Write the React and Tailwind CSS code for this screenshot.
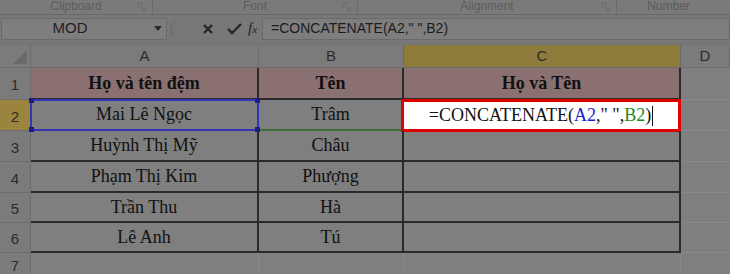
import React from "react";

const ui = { fontFamily: '"Liberation Sans", Arial, sans-serif' };
const serif = { fontFamily: '"Liberation Serif", "Times New Roman", serif' };

const people = [
  ["Mai Lê Ngọc", "Trâm", 31],
  ["Huỳnh Thị Mỹ", "Châu", 31],
  ["Phạm Thị Kim", "Phượng", 31],
  ["Trần Thu", "Hà", 30],
  ["Lê Anh", "Tú", 30],
];

function Launcher() {
  return (
    <svg width="9" height="9" viewBox="0 0 9 9" className="shrink-0">
      <path d="M1 1h5M1 1v5" stroke="#6a6a6a" strokeWidth="1" fill="none" />
      <path d="M3 3l5 5M8 5v3H5" stroke="#6a6a6a" strokeWidth="1" fill="none" />
    </svg>
  );
}

function GroupLabel({ label, width, launcher }) {
  return (
    <div
      className="relative flex h-full items-center justify-center border-r border-[#6c6c6c]"
      style={{ width }}
    >
      <span className="text-[12px] leading-none text-[#5c5c5c] -mt-[3px]">{label}</span>
      {launcher && (
        <div className="absolute right-[6px] top-[2px]">
          <Launcher />
        </div>
      )}
    </div>
  );
}

function RowHead({ n, active }) {
  return (
    <div
      className={`flex items-center justify-center border-b border-r border-[#6c6c6c] text-[15px] text-[#2b2b2b] ${
        active ? "bg-[#9b853e]" : "bg-[#7b7b7b]"
      }`}
    >
      <span className="mt-[4px]">{n}</span>
    </div>
  );
}

export default function App() {
  return (
    <div className="h-[274px] w-[730px] overflow-hidden bg-[#7f7f7f]" style={ui}>
      {/* ribbon group labels */}
      <div className="flex h-[15px] border-b border-[#696969] bg-[#7a7a7a]">
        <GroupLabel label="Clipboard" width={153} launcher />
        <GroupLabel label="Font" width={205} launcher />
        <GroupLabel label="Alignment" width={259} launcher />
        <div className="flex flex-1 items-center justify-center">
          <span className="text-[12px] leading-none text-[#5c5c5c] -mt-[3px] -ml-[10px]">Number</span>
        </div>
      </div>

      {/* formula bar */}
      <div className="flex h-[27px] items-center bg-[#787878] py-[2px]">
        <div className="flex h-[22px] w-[166px] items-center border border-[#6a6a6a] bg-[#7e7e7e] ml-[1px]">
          <span className="flex-1 text-center text-[15px] text-[#1f1f1f] -ml-[16px]">MOD</span>
          <svg width="8" height="5" viewBox="0 0 8 5" className="mr-[4px]">
            <path d="M0 0h8L4 5z" fill="#2a2a2a" />
          </svg>
        </div>
        <div className="flex h-[22px] w-[95px] items-center">
          <div className="ml-[3px] flex h-[20px] w-[12px] items-center justify-center rounded-l-full border-l-2 border-[#6d6d6d]">
            <span className="text-[9px] text-[#6d6d6d]">=</span>
          </div>
          <svg width="12" height="12" viewBox="0 0 12 12" className="ml-[20px]">
            <path d="M2 2l8 8M10 2l-8 8" stroke="#262626" strokeWidth="2.4" />
          </svg>
          <svg width="15" height="12" viewBox="0 0 15 12" className="ml-[13px]">
            <path d="M1 6l4 4L14 1" stroke="#262626" strokeWidth="2.4" fill="none" />
          </svg>
          <span
            className="ml-[6px] text-[15px] italic text-[#262626]"
            style={{ fontFamily: '"Liberation Serif", serif' }}
          >
            f<span className="text-[11px]">x</span>
          </span>
        </div>
        <div className="flex h-[22px] flex-1 items-center border border-[#6a6a6a] bg-[#7e7e7e] pl-[8px]">
          <span className="text-[14px] text-[#1c1c1c]">=CONCATENATE(A2," ",B2)</span>
        </div>
      </div>

      <div className="h-[3px] bg-[#767676]" />

      {/* sheet */}
      <div className="grid grid-cols-[31px_228px_145px_277px_49px] grid-rows-[23px_32px_31px_31px_31px_30px_30px_24px]">
        {/* column headers */}
        <div className="flex items-end justify-end border-b border-r border-[#6c6c6c] bg-[#7b7b7b] p-[3px]">
          <svg width="14" height="14" viewBox="0 0 14 14">
            <path d="M14 0v14H0z" fill="#6a6a6a" />
          </svg>
        </div>
        {["A", "B", "C", "D"].map((c) => (
          <div
            key={c}
            className={`flex items-center justify-center border-b border-r border-[#6c6c6c] text-[15px] text-[#2b2b2b] ${
              c === "C" ? "bg-[#8c7b3b]" : "bg-[#7b7b7b]"
            }`}
          >
            {c}
          </div>
        ))}

        {/* row 1 */}
        <RowHead n="1" />
        <div
          className="flex items-center justify-center border-b-2 border-r-2 border-[#2a2a2a] bg-[#8a7070] text-[18px] font-bold text-[#111]"
          style={serif}
        >
          Họ và tên đệm
        </div>
        <div
          className="flex items-center justify-center border-b-2 border-r-2 border-[#2a2a2a] bg-[#8a7070] text-[18px] font-bold text-[#111]"
          style={serif}
        >
          Tên
        </div>
        <div
          className="flex items-center justify-center border-b-2 border-r-2 border-[#2a2a2a] bg-[#8a7070] text-[18px] font-bold text-[#111]"
          style={serif}
        >
          Họ và Tên
        </div>
        <div className="border-b border-[#898989]" />

        {people.map(([name, given], i) => {
          const first = i === 0;
          return (
            <React.Fragment key={name}>
              <RowHead n={String(i + 2)} active={first} />
              <div
                className="relative flex items-center justify-center border-b-2 border-r-2 border-[#2a2a2a] text-[18px] text-[#111]"
                style={serif}
              >
                {name}
                {first && (
                  <div className="absolute -bottom-[2px] -left-[1px] -right-[2px] -top-[1px] border-2 border-[#3434b4]">
                    <div className="absolute -left-[3px] -top-[3px] h-[5px] w-[5px] bg-[#1e1e8a]" />
                    <div className="absolute -right-[3px] -top-[3px] h-[5px] w-[5px] bg-[#1e1e8a]" />
                    <div className="absolute -bottom-[3px] -left-[3px] h-[5px] w-[5px] bg-[#1e1e8a]" />
                    <div className="absolute -bottom-[3px] -right-[3px] h-[5px] w-[5px] bg-[#1e1e8a]" />
                  </div>
                )}
              </div>
              <div
                className={`flex items-center justify-center border-b-2 border-r-2 text-[18px] text-[#111] ${
                  first ? "border-b-[#3c6e3c] border-r-[#2a2a2a]" : "border-[#2a2a2a]"
                }`}
                style={serif}
              >
                {given}
              </div>
              {first ? (
                <div
                  className="-ml-[3px] -mt-[1px] -mb-[1px] flex items-center justify-center border-[3px] border-[#e00000] bg-white text-[18px] text-[#111]"
                  style={serif}
                >
                  <span>
                    =CONCATENATE(<span className="text-[#1a1ad0]">A2</span>," ",
                    <span className="text-[#1d8a1d]">B2</span>)
                  </span>
                  <span className="ml-[1px] h-[20px] w-px bg-[#111]" />
                </div>
              ) : (
                <div className="border-b-2 border-r-2 border-[#2a2a2a]" />
              )}
              <div className="border-b border-[#898989]" />
            </React.Fragment>
          );
        })}

        {/* row 7 */}
        <RowHead n="7" />
        <div className="border-b border-r border-[#898989]" />
        <div className="border-b border-r border-[#898989]" />
        <div className="border-b border-r border-[#898989]" />
        <div className="border-b border-[#898989]" />
      </div>
    </div>
  );
}
